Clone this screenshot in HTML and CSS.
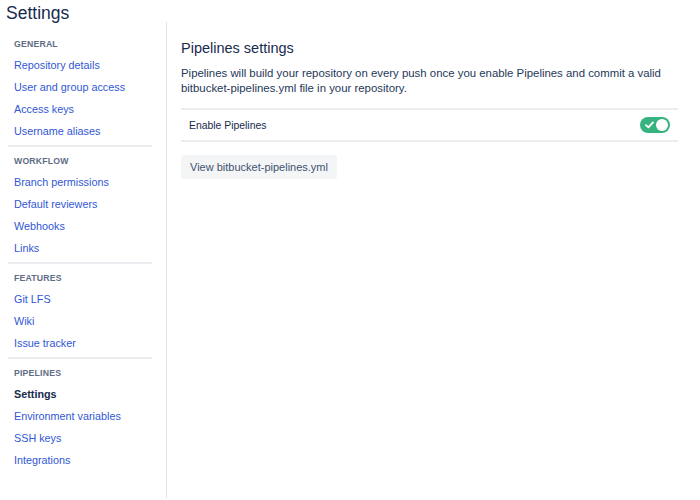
FILE: index.html
```html
<!DOCTYPE html>
<html>
<head>
<meta charset="utf-8">
<link rel="stylesheet" href="styles.css">
</head>
<body>
<h1 class="page-title">Settings</h1>
<div class="layout">
  <nav class="sidebar">
    <div class="group">
      <div class="group-title">General</div>
      <a class="nav-link">Repository details</a>
      <a class="nav-link">User and group access</a>
      <a class="nav-link">Access keys</a>
      <a class="nav-link">Username aliases</a>
    </div>
    <div class="group">
      <div class="group-title">Workflow</div>
      <a class="nav-link">Branch permissions</a>
      <a class="nav-link">Default reviewers</a>
      <a class="nav-link">Webhooks</a>
      <a class="nav-link">Links</a>
    </div>
    <div class="group">
      <div class="group-title">Features</div>
      <a class="nav-link">Git LFS</a>
      <a class="nav-link">Wiki</a>
      <a class="nav-link">Issue tracker</a>
    </div>
    <div class="group last">
      <div class="group-title">Pipelines</div>
      <a class="nav-link active">Settings</a>
      <a class="nav-link">Environment variables</a>
      <a class="nav-link">SSH keys</a>
      <a class="nav-link">Integrations</a>
    </div>
  </nav>
  <main class="content">
    <h2 class="section-title">Pipelines settings</h2>
    <p class="intro">Pipelines will build your repository on every push once you enable Pipelines and commit a valid bitbucket-pipelines.yml file in your repository.</p>
    <div class="setting-row">
      <span class="setting-label">Enable Pipelines</span>
      <span class="toggle">
        <svg class="check" width="9" height="8" viewBox="0 0 9 8"><path d="M1 4.2 L3.4 6.4 L8 1.4" fill="none" stroke="#fff" stroke-width="1.8" stroke-linecap="round" stroke-linejoin="round"/></svg>
        <span class="knob"></span>
      </span>
    </div>
    <button class="btn">View bitbucket-pipelines.yml</button>
  </main>
</div>
</body>
</html>
```
FILE: styles.css
```css
* { box-sizing: border-box; }
html, body { margin: 0; padding: 0; background: #fff; }
body {
  font-family: "Liberation Sans", Arial, sans-serif;
  color: #172b4d;
  width: 700px;
  height: 500px;
  overflow: hidden;
}
.page-title {
  margin: 0;
  padding: 2px 0 0 6px;
  font-size: 17.5px;
  font-weight: 400;
  line-height: 22px;
  color: #172b4d;
  height: 22px;
}
.layout {
  display: flex;
  height: 476px;
}
.sidebar {
  width: 167px;
  padding: 13px 14px 0 8px;
  border-right: 1px solid #dfe1e6;
  flex: none;
}
.group {
  border-bottom: 2px solid #ebecf0;
  padding: 0 0 3px 6px;
  margin-bottom: 5px;
}
.group.last { border-bottom: none; }
.group-title {
  font-size: 8.7px;
  font-weight: 700;
  text-transform: uppercase;
  color: #5e6c84;
  height: 18px;
  line-height: 18px;
  letter-spacing: 0.2px;
  margin-bottom: 1px;
}
.nav-link {
  display: block;
  font-size: 10.8px;
  line-height: 22px;
  height: 22px;
  color: #3157d5;
  text-decoration: none;
}
.nav-link.active {
  color: #172b4d;
  font-weight: 700;
}
.content {
  flex: 1;
  padding: 16px 22px 0 14px;
}
.section-title {
  margin: 0 0 8px 0;
  font-size: 14.5px;
  font-weight: 400;
  line-height: 20px;
  color: #172b4d;
}
.intro {
  margin: 0 0 12px 0;
  font-size: 11.4px;
  line-height: 15px;
  color: #253858;
}
.setting-row {
  display: flex;
  align-items: center;
  justify-content: space-between;
  height: 34px;
  border-top: 2px solid #ebecf0;
  border-bottom: 2px solid #ebecf0;
  padding: 0 8px;
  margin-bottom: 13px;
}
.setting-label {
  font-size: 10.4px;
  color: #172b4d;
}
.toggle {
  position: relative;
  display: flex;
  align-items: center;
  width: 30px;
  height: 16px;
  border-radius: 8px;
  background: #36b37e;
  padding-left: 5px;
}
.knob {
  position: absolute;
  right: 2px;
  top: 2px;
  width: 12px;
  height: 12px;
  border-radius: 50%;
  background: #fff;
}
.btn {
  font-family: inherit;
  font-size: 11px;
  color: #42526e;
  background: #f4f5f7;
  border: none;
  border-radius: 3px;
  height: 24px;
  padding: 0 9px;
  cursor: pointer;
}
```
